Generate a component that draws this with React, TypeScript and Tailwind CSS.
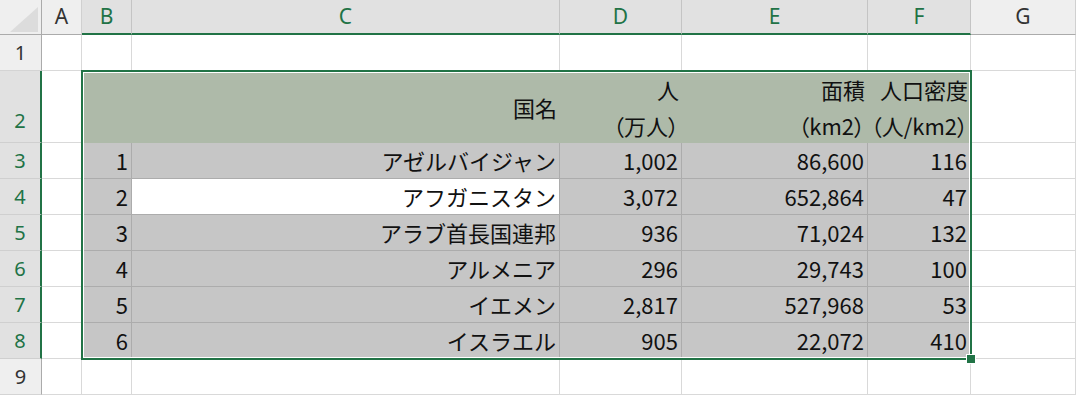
import React from 'react';

const GREEN = 'text-[#217346]';

type Col = { key: string; w: string };

const cols: Col[] = [
  { key: 'A', w: 'w-[40px]' },
  { key: 'B', w: 'w-[50px]' },
  { key: 'C', w: 'w-[428px]' },
  { key: 'D', w: 'w-[122px]' },
  { key: 'E', w: 'w-[186px]' },
  { key: 'F', w: 'w-[103px]' },
  { key: 'G', w: 'w-[105px]' },
];

const rows = [
  { no: 1, name: 'アゼルバイジャン', pop: '1,002', area: '86,600', density: '116' },
  { no: 2, name: 'アフガニスタン', pop: '3,072', area: '652,864', density: '47' },
  { no: 3, name: 'アラブ首長国連邦', pop: '936', area: '71,024', density: '132' },
  { no: 4, name: 'アルメニア', pop: '296', area: '29,743', density: '100' },
  { no: 5, name: 'イエメン', pop: '2,817', area: '527,968', density: '53' },
  { no: 6, name: 'イスラエル', pop: '905', area: '22,072', density: '410' },
];

const headFont = { fontFamily: '"Noto Sans", "Liberation Sans", sans-serif' };

const RowHead: React.FC<{ n: number; selected?: boolean; tall?: boolean }> = ({ n, selected, tall }) => (
  <div
    className={
      'w-[42px] shrink-0 flex justify-center text-[20px] ' +
      (tall ? 'h-[72px] items-end pb-[6px] ' : 'h-[36px] items-center ') +
      (selected
        ? 'bg-[#e1e1e1] border-r-2 border-r-[#217346] border-b border-b-[#cfcfcf] ' + GREEN
        : 'bg-[#efefef] border-r border-r-[#ababab] border-b border-b-[#d4d4d4] text-[#333]')
    }
    style={headFont}
  >
    {n}
  </div>
);

const Blank: React.FC<{ w: string }> = ({ w }) => (
  <div className={w + ' shrink-0 h-full bg-white border-r border-b border-[#d9d9d9]'} />
);

const Cell: React.FC<{ w: string; white?: boolean; children?: React.ReactNode }> = ({ w, white, children }) => (
  <div
    className={
      w +
      ' shrink-0 h-full flex items-center justify-end pr-[3px] border-r border-b whitespace-nowrap ' +
      (white ? 'bg-white border-[#acacac]' : 'bg-[#c6c6c6] border-[#acacac]')
    }
  >
    {children}
  </div>
);

export default function App() {
  return (
    <div
      className="relative w-[1076px] h-[396px] bg-white overflow-hidden text-[#111]"
      style={{ fontFamily: '"Noto Sans CJK JP", "Noto Sans", sans-serif' }}
    >
      {/* column headers */}
      <div className="flex h-[35px]">
        <div className="relative w-[42px] shrink-0 bg-[#efefef] border-r border-b border-[#ababab]">
          <svg className="absolute left-[10px] top-[7px]" width="28" height="25" viewBox="0 0 28 25">
            <polygon points="28,0 28,25 0,25" fill="#dcdcdc" />
          </svg>
        </div>
        {cols.map((c) => {
          const sel = c.key !== 'A' && c.key !== 'G';
          return (
            <div
              key={c.key}
              className={
                c.w +
                ' shrink-0 flex items-center justify-center text-[21px] border-r ' +
                (sel
                  ? 'bg-[#e1e1e1] border-r-[#c4c4c4] border-b-2 border-b-[#217346] ' + GREEN
                  : 'bg-[#efefef] border-r-[#d0d0d0] border-b border-b-[#ababab] text-[#333]')
              }
              style={headFont}
            >
              {c.key}
            </div>
          );
        })}
      </div>

      {/* row 1 */}
      <div className="flex h-[36px]">
        <RowHead n={1} />
        {cols.map((c) => (
          <Blank key={c.key} w={c.w} />
        ))}
      </div>

      {/* row 2: header of table */}
      <div className="flex h-[72px] text-[22px] whitespace-nowrap">
        <RowHead n={2} selected tall />
        <Blank w="w-[40px]" />
        <div className="w-[50px] shrink-0 h-full bg-[#aebaa9]" />
        <div className="w-[428px] shrink-0 h-full bg-[#aebaa9] flex items-center justify-end pr-[3px]">国名</div>
        <div className="w-[122px] shrink-0 h-full bg-[#aebaa9] flex flex-col items-end justify-center pr-[3px] leading-[36px] [font-feature-settings:'palt']">
          <span>人</span>
          <span>（万人）</span>
        </div>
        <div className="w-[186px] shrink-0 h-full bg-[#aebaa9] flex flex-col items-end justify-center pr-[3px] leading-[36px] [font-feature-settings:'palt']">
          <span>面積</span>
          <span>（km2）</span>
        </div>
        <div className="w-[103px] shrink-0 h-full bg-[#aebaa9] flex flex-col items-end justify-center pr-[3px] leading-[36px] [font-feature-settings:'palt']">
          <span>人口密度</span>
          <span>（人/km2）</span>
        </div>
        <Blank w="w-[105px]" />
      </div>

      {/* data rows */}
      {rows.map((r, i) => (
        <div key={r.no} className="flex h-[36px] text-[22px]">
          <RowHead n={i + 3} selected />
          <Blank w="w-[40px]" />
          <Cell w="w-[50px]">{r.no}</Cell>
          <Cell w="w-[428px]" white={i === 1}>{r.name}</Cell>
          <Cell w="w-[122px]">{r.pop}</Cell>
          <Cell w="w-[186px]">{r.area}</Cell>
          <Cell w="w-[103px]">{r.density}</Cell>
          <Blank w="w-[105px]" />
        </div>
      ))}

      {/* row 9 */}
      <div className="flex h-[36px]">
        <RowHead n={9} />
        {cols.map((c) => (
          <Blank key={c.key} w={c.w} />
        ))}
      </div>

      {/* selection border */}
      <div className="absolute left-[81px] top-[70px] w-[891px] h-[290px] border-2 border-[#217346] shadow-[inset_0_0_0_1px_#ffffff] pointer-events-none" />
      <div className="absolute left-[967px] top-[355px] w-[8px] h-[8px] bg-[#217346] ring-1 ring-white" />
    </div>
  );
}
